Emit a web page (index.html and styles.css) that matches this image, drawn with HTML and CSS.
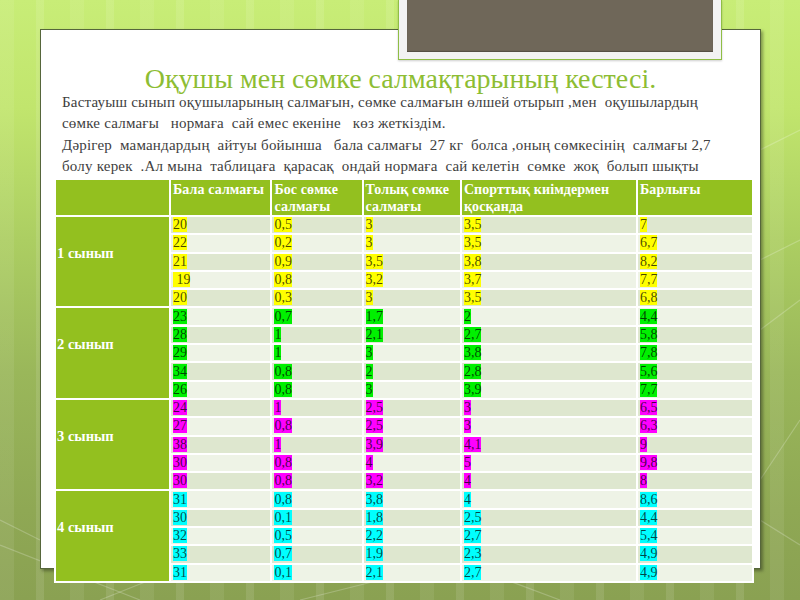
FILE: index.html
```html
<!DOCTYPE html>
<html lang="kk">
<head>
<meta charset="utf-8">
<title>Оқушы мен сөмке салмақтарының кестесі</title>
<link rel="stylesheet" href="styles.css">
</head>
<body>
<div class="slide">
  <div class="panel">
    <h1 class="title">Оқушы мен сөмке салмақтарының кестесі.</h1>
    <p class="text">Бастауыш сынып оқушыларының салмағын, сөмке салмағын өлшей отырып ,мен  оқушылардың<br>сөмке салмағы   нормаға  сай емес екеніне   көз жеткіздім.</p>
    <p class="text">Дәрігер  мамандардың  айтуы бойынша   бала салмағы  27 кг  болса ,оның сөмкесінің  салмағы 2,7<br>болу керек  .Ал мына  таблицаға  қарасақ  ондай нормаға  сай келетін  сөмке  жоқ  болып шықты</p>
    <table class="grid">
      <colgroup>
        <col class="c1"><col class="c2"><col class="c3"><col class="c4"><col class="c5"><col class="c6">
      </colgroup>
      <tr class="head">
        <th></th><th>Бала салмағы</th><th>Бос сөмке салмағы</th><th>Толық сөмке салмағы</th><th>Спорттық киімдермен қосқанда</th><th>Барлығы</th>
      </tr>
      <tr class="dark"><td class="grp" rowspan="5">1 сынып</td><td><span class="hl y">20</span></td><td><span class="hl y">0,5</span></td><td><span class="hl y">3</span></td><td><span class="hl y">3,5</span></td><td><span class="hl y">7</span></td></tr>
      <tr class="light"><td><span class="hl y">22</span></td><td><span class="hl y">0,2</span></td><td><span class="hl y">3</span></td><td><span class="hl y">3,5</span></td><td><span class="hl y">6,7</span></td></tr>
      <tr class="dark"><td><span class="hl y">21</span></td><td><span class="hl y">0,9</span></td><td><span class="hl y">3,5</span></td><td><span class="hl y">3,8</span></td><td><span class="hl y">8,2</span></td></tr>
      <tr class="light"><td><span class="hl y"> 19</span></td><td><span class="hl y">0,8</span></td><td><span class="hl y">3,2</span></td><td><span class="hl y">3,7</span></td><td><span class="hl y">7,7</span></td></tr>
      <tr class="dark"><td><span class="hl y">20</span></td><td><span class="hl y">0,3</span></td><td><span class="hl y">3</span></td><td><span class="hl y">3,5</span></td><td><span class="hl y">6,8</span></td></tr>

      <tr class="light"><td class="grp" rowspan="5">2 сынып</td><td><span class="hl g">23</span></td><td><span class="hl g">0,7</span></td><td><span class="hl g">1,7</span></td><td><span class="hl g">2</span></td><td><span class="hl g">4,4</span></td></tr>
      <tr class="dark"><td><span class="hl g">28</span></td><td><span class="hl g">1</span></td><td><span class="hl g">2,1</span></td><td><span class="hl g">2,7</span></td><td><span class="hl g">5,8</span></td></tr>
      <tr class="light"><td><span class="hl g">29</span></td><td><span class="hl g">1</span></td><td><span class="hl g">3</span></td><td><span class="hl g">3,8</span></td><td><span class="hl g">7,8</span></td></tr>
      <tr class="dark"><td><span class="hl g">34</span></td><td><span class="hl g">0,8</span></td><td><span class="hl g">2</span></td><td><span class="hl g">2,8</span></td><td><span class="hl g">5,6</span></td></tr>
      <tr class="light"><td><span class="hl g">26</span></td><td><span class="hl g">0,8</span></td><td><span class="hl g">3</span></td><td><span class="hl g">3,9</span></td><td><span class="hl g">7,7</span></td></tr>

      <tr class="dark"><td class="grp grp3" rowspan="5">3 сынып</td><td><span class="hl m">24</span></td><td><span class="hl m">1</span></td><td><span class="hl m">2,5</span></td><td><span class="hl m">3</span></td><td><span class="hl m">6,5</span></td></tr>
      <tr class="light"><td><span class="hl m">27</span></td><td><span class="hl m">0,8</span></td><td><span class="hl m">2,5</span></td><td><span class="hl m">3</span></td><td><span class="hl m">6,3</span></td></tr>
      <tr class="dark"><td><span class="hl m">38</span></td><td><span class="hl m">1</span></td><td><span class="hl m">3,9</span></td><td><span class="hl m">4,1</span></td><td><span class="hl m">9</span></td></tr>
      <tr class="light"><td><span class="hl m">30</span></td><td><span class="hl m">0,8</span></td><td><span class="hl m">4</span></td><td><span class="hl m">5</span></td><td><span class="hl m">9,8</span></td></tr>
      <tr class="dark"><td><span class="hl m">30</span></td><td><span class="hl m">0,8</span></td><td><span class="hl m">3,2</span></td><td><span class="hl m">4</span></td><td><span class="hl m">8</span></td></tr>

      <tr class="light"><td class="grp" rowspan="5">4 сынып</td><td><span class="hl c">31</span></td><td><span class="hl c">0,8</span></td><td><span class="hl c">3,8</span></td><td><span class="hl c">4</span></td><td><span class="hl c">8,6</span></td></tr>
      <tr class="dark"><td><span class="hl c">30</span></td><td><span class="hl c">0,1</span></td><td><span class="hl c">1,8</span></td><td><span class="hl c">2,5</span></td><td><span class="hl c">4,4</span></td></tr>
      <tr class="light"><td><span class="hl c">32</span></td><td><span class="hl c">0,5</span></td><td><span class="hl c">2,2</span></td><td><span class="hl c">2,7</span></td><td><span class="hl c">5,4</span></td></tr>
      <tr class="dark"><td><span class="hl c">33</span></td><td><span class="hl c">0,7</span></td><td><span class="hl c">1,9</span></td><td><span class="hl c">2,3</span></td><td><span class="hl c">4,9</span></td></tr>
      <tr class="light"><td><span class="hl c">31</span></td><td><span class="hl c">0,1</span></td><td><span class="hl c">2,1</span></td><td><span class="hl c">2,7</span></td><td><span class="hl c">4,9</span></td></tr>
    </table>
  </div>
  <div class="tab"><div class="tab-inner"></div></div>
</div>
</body>
</html>
```
FILE: styles.css
```css
html, body {
  margin: 0;
  padding: 0;
}
body {
  width: 800px;
  height: 600px;
  overflow: hidden;
  font-family: "Liberation Serif", "Times New Roman", serif;
}
.slide {
  position: relative;
  width: 800px;
  height: 600px;
  overflow: hidden;
  background:
    url("data:image/svg+xml;utf8,<svg xmlns='http://www.w3.org/2000/svg' width='800' height='600'><g stroke='rgba(255,255,255,0.22)' stroke-width='1.2' fill='none'><line x1='0' y1='545' x2='140' y2='600'/><line x1='100' y1='600' x2='200' y2='560'/><line x1='300' y1='600' x2='420' y2='570'/><line x1='480' y1='570' x2='560' y2='600'/><line x1='760' y1='150' x2='800' y2='130'/><line x1='760' y1='260' x2='800' y2='240'/><line x1='760' y1='330' x2='800' y2='300'/><line x1='760' y1='480' x2='800' y2='420'/><line x1='760' y1='520' x2='800' y2='545'/><line x1='0' y1='520' x2='40' y2='540'/></g></svg>") no-repeat,
    repeating-linear-gradient(90deg, rgba(255,255,255,0.07) 0 14px, rgba(255,255,255,0) 14px 36px, rgba(255,255,255,0.1) 36px 44px, rgba(255,255,255,0) 44px 70px),
    linear-gradient(180deg, #c8ed77 0%, #c1e56d 18%, #acce62 40%, #9ab75a 62%, #8fa854 85%, #8aa152 100%);
}
.panel {
  box-sizing: border-box;
  width: 721px;
  height: 540px;
  margin: 29px 0 0 40px;
  padding: 0;
  background: #ffffff;
  border: 1px solid #56663b;
  box-shadow: 2px 2px 3px rgba(0, 0, 0, 0.35);
  display: flex;
  flex-direction: column;
}
.title {
  margin: 36px 0 0 0;
  font-weight: normal;
  font-size: 28px;
  line-height: 26px;
  color: #8dbd33;
  text-align: center;
}
.text {
  margin: 0;
  padding-left: 21px;
  font-size: 15px;
  line-height: 21px;
  letter-spacing: 0.2px;
  color: #404040;
  white-space: pre;
}
.text + .text {
  margin-top: 1px;
}
.grid {
  margin: 1px 0 0 13px;
  border-collapse: separate;
  border-spacing: 2px;
  background: #ffffff;
  table-layout: fixed;
  width: 700px;
  flex: none;
}
.c1 { width: 109px; }
.c2 { width: 96px; }
.c3 { width: 86px; }
.c4 { width: 93px; }
.c5 { width: 168px; }
.c6 { width: 110px; }
.grid th, .grid td {
  padding: 0 2px;
  overflow: hidden;
}
.head {
  height: 35px;
}
.head th {
  background: #93c01f;
  color: #ffffff;
  font-size: 14px;
  line-height: 17px;
  letter-spacing: 0.1px;
  font-weight: bold;
  text-align: left;
  vertical-align: top;
  padding-top: 1px;
}
.dark, .light {
  height: 16.3px;
}
.dark td {
  background: #dee7cf;
}
.light td {
  background: #eef3e6;
}
.grid td {
  font-size: 14px;
  line-height: 16px;
  vertical-align: middle;
  white-space: pre;
  color: rgba(0, 0, 0, 0.72);
}
.grid td.grp {
  background: #93c01f;
  color: #ffffff;
  font-weight: bold;
  font-size: 14.5px;
  padding: 0 0 18px 1px;
}
.hl.y { background: #ffff00; }
.hl.g { background: #00f000; }
.hl.m { background: #ff00ff; }
.hl.c { background: #00ffff; }
.tab {
  position: absolute;
  top: 0;
  left: 398px;
  width: 324px;
  height: 60px;
  box-sizing: border-box;
  border: 1px solid #8fbe45;
  border-top: none;
  background: #f3f3f3;
  padding: 0 8px 7px 8px;
  box-shadow: 0 1px 2px rgba(0, 0, 0, 0.2);
}
.tab-inner {
  height: 100%;
  background: #6f6759;
  box-shadow: inset 0 -1px 1px rgba(0, 0, 0, 0.25);
}
```
